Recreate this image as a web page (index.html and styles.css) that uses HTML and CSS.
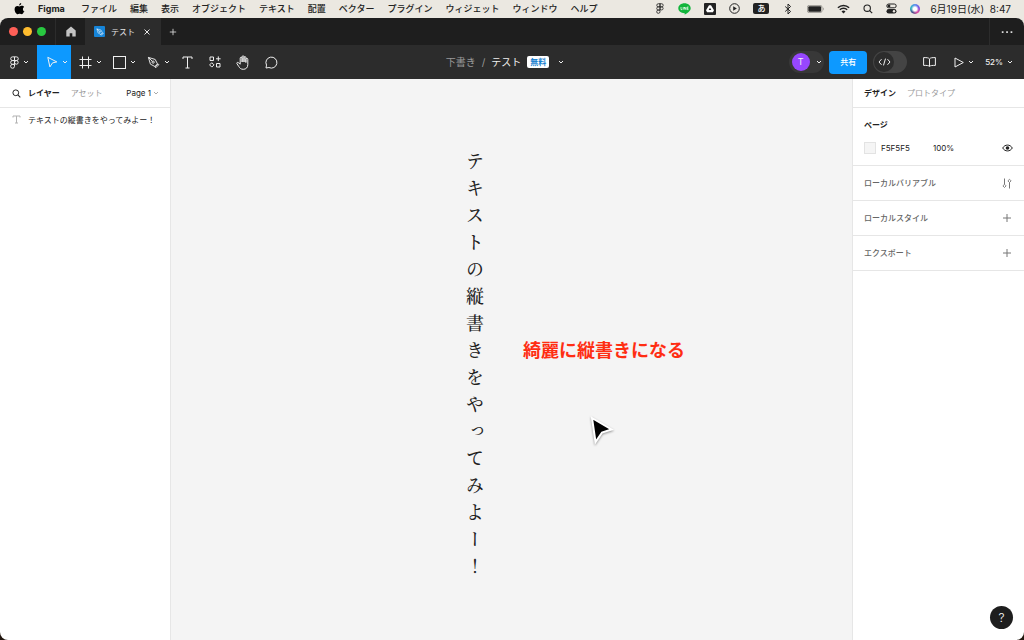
FILE: index.html
```html
<!DOCTYPE html>
<html lang="ja">
<head>
<meta charset="utf-8">
<title>テスト – Figma</title>
<link rel="stylesheet" href="styles.css">
</head>
<body>
<svg class="defs" width="0" height="0" aria-hidden="true">
  <symbol id="chev" viewBox="0 0 6 6"><path d="M1 2l2 2 2-2" fill="none" stroke="currentColor"/></symbol>
  <symbol id="figma" viewBox="0 0 10 12"><path d="M5 .8H3.2a1.7 1.7 0 000 3.4H5zM5 .8h1.8a1.7 1.7 0 010 3.4H5zM5 4.2H3.2a1.7 1.7 0 000 3.5H5zM5 7.7H3.2A1.8 1.8 0 105 9.5z" fill="none" stroke="currentColor" stroke-width=".9"/><circle cx="6.7" cy="5.9" r="1.7" fill="none" stroke="currentColor" stroke-width=".9"/></symbol>
  <symbol id="glass" viewBox="0 0 10 10"><circle cx="4.2" cy="4.2" r="3.2" fill="none" stroke="currentColor" stroke-width="1.1"/><path d="M6.6 6.6L9.2 9.2" stroke="currentColor" stroke-width="1.2"/></symbol>
  <symbol id="nib" viewBox="0 0 14 14"><path d="M1.5 1.5l7.3 2.2 2.5 4.8-2.8 2.8-4.8-2.5zM1.5 1.5l4.3 4.3M8.5 11.8l3.3-3.3.9.9-3.3 3.3z" fill="none" stroke="currentColor" stroke-linejoin="round"/><circle cx="6.6" cy="6.6" r="1.2" fill="none" stroke="currentColor"/></symbol>
  <symbol id="plus" viewBox="0 0 10 10"><path d="M5 1v8M1 5h8" fill="none" stroke="currentColor"/></symbol>
</svg>

<nav class="menubar" aria-label="メニューバー">
  <svg class="apple" width="11" height="12" viewBox="0 0 11 12"><path d="M7.2 0c.1 1.3-.9 2.400-2 2.400C5.100 1.200 6.100.2 7.200 0zM9.900 8.700c-.6 1.300-1.300 2.500-2.200 2.500-.8 0-1-.4-2-.4s-1.300.4-2 .4C2.300 11.200.6 8.600.6 6.200.6 4 2 2.900 3.400 2.900c.9 0 1.600.5 2.200.5s1.300-.6 2.500-.6c.5 0 1.400.2 2 1.100-1.800 1.100-1.500 3.800.5 4.500-.2.100-.4.200-.7.300z"/></svg>
  <div class="menus">
    <strong>Figma</strong><span>ファイル</span><span>編集</span><span>表示</span><span>オブジェクト</span><span>テキスト</span><span>配置</span><span>ベクター</span><span>プラグイン</span><span>ウィジェット</span><span>ウィンドウ</span><span>ヘルプ</span>
  </div>
  <div class="status">
    <svg width="10" height="11"><use href="#figma"/></svg>
    <span class="line-app"><svg width="13" height="12" viewBox="0 0 13 12"><path d="M6.500.3c3.500 0 6.200 2.200 6.200 5 0 2.600-3.400 5-6 6.400.2-.8.100-1.300-.2-1.400C3 10.200.3 8.100.3 5.300c0-2.800 2.700-5 6.200-5z" fill="#12b53c"/><path d="M3 4v2.600h1.300M5.200 4v2.600M6.300 6.600V4l1.600 2.600V4M10.500 4H9.200v2.600h1.300M9.200 5.300h1.200" fill="none" stroke="#fff" stroke-width=".7"/></svg></span>
    <svg width="12" height="12" viewBox="0 0 12 12"><rect width="12" height="12" rx="1" fill="#222"/><path d="M5 2.300h2l3 5-1.100 2H3.100L2 7.300zM6 4.800L4.700 7.100h2.600z" fill="#fff" fill-rule="evenodd"/></svg>
    <svg width="11" height="11" viewBox="0 0 11 11"><circle cx="5.500" cy="5.500" r="4.800" fill="none" stroke="#222"/><path d="M4.200 3.300l3.600 2.200-3.600 2.200z" fill="#222"/></svg>
    <span class="ime">あ</span>
    <svg width="12" height="12" viewBox="0 0 12 12"><path d="M3.200 3.500l5.400 5L6 11V1l2.600 2.500-5.400 5" fill="none" stroke="#222"/></svg>
    <svg width="17" height="8" viewBox="0 0 17 8"><rect x=".4" y=".4" width="14.600" height="7.200" rx="1.800" fill="none" stroke="#8b8984" stroke-width=".8"/><rect x="1.300" y="1.300" width="12.800" height="5.400" rx="1" fill="#222"/><path d="M16 2.600v2.800c.9-.5.9-2.300 0-2.800z" fill="#8b8984"/></svg>
    <svg width="13" height="10" viewBox="0 0 13 10"><path d="M.9 3.700a8 8 0 0111.200 0M2.800 5.700a5.300 5.300 0 017.400 0" fill="none" stroke="#222" stroke-width="1.500"/><path d="M6.500 9.500l2-2.100a2.900 2.900 0 00-4 0z" fill="#222"/></svg>
    <svg width="10" height="10"><use href="#glass"/></svg>
    <svg width="11" height="11" viewBox="0 0 11 11"><rect x=".8" y="1" width="9.400" height="3.800" rx="1.900" fill="none" stroke="#222"/><circle cx="3" cy="2.900" r="1.400" fill="#222"/><rect x=".5" y="6" width="10" height="4.600" rx="2.300" fill="#222"/><circle cx="8" cy="8.300" r="1.200" fill="#ebe8e1"/></svg>
    <div class="clock"><span class="siri"></span><time>6月19日(水)&nbsp; 8:47</time></div>
  </div>
</nav>

<div class="window">
  <header class="tabbar">
    <div class="lights"><i class="red"></i><i class="yellow"></i><i class="green"></i></div>
    <button class="home" aria-label="ホーム"><svg width="10" height="11" viewBox="0 0 10 11"><path d="M5 .5l4.700 4V10.500H6.300V7.300H3.700v3.200H.3v-6z" fill="#c4c4c4"/></svg></button>
    <div class="tab">
      <span class="file-icon"><svg width="8" height="8"><use href="#nib"/></svg></span>
      <span>テスト</span>
      <button aria-label="タブを閉じる"><svg width="8" height="8" viewBox="0 0 8 8"><path d="M1.500 1.500l5 5M6.500 1.500l-5 5" stroke="currentColor"/></svg></button>
    </div>
    <button class="new-tab" aria-label="新規タブ"><svg width="8" height="8"><use href="#plus"/></svg></button>
    <button class="more" aria-label="その他"><svg width="12" height="4" viewBox="0 0 12 4"><path d="M.8 1.200h1.700v1.700H.8zM5.200 1.200h1.700v1.700H5.200zM9.600 1.200h1.700v1.700H9.600z" fill="#ddd"/></svg></button>
  </header>

  <div class="toolbar">
    <div class="tools">
      <button class="tool main" aria-label="メインメニュー"><svg width="11" height="13"><use href="#figma"/></svg><svg width="6" height="6"><use href="#chev"/></svg></button>
      <button class="tool active" aria-label="移動"><svg width="12" height="12" viewBox="0 0 12 12"><path d="M1.800 1.300l9 4.600-4.300 1-2.600 4z" fill="none" stroke="currentColor" stroke-linejoin="round"/></svg><svg width="6" height="6"><use href="#chev"/></svg></button>
      <button class="tool" aria-label="フレーム"><svg width="13" height="13" viewBox="0 0 13 13"><path d="M3.500.5v12M9.500.5v12M.5 3.500h12M.5 9.500h12" stroke="currentColor"/></svg><svg width="6" height="6"><use href="#chev"/></svg></button>
      <button class="tool" aria-label="長方形"><svg width="13" height="13" viewBox="0 0 13 13"><rect x=".5" y=".5" width="12" height="12" fill="none" stroke="currentColor"/></svg><svg width="6" height="6"><use href="#chev"/></svg></button>
      <button class="tool" aria-label="ペン"><svg width="13" height="13"><use href="#nib"/></svg><svg width="6" height="6"><use href="#chev"/></svg></button>
      <button class="tool small" aria-label="テキスト"><svg width="11" height="13" viewBox="0 0 11 13"><path d="M1 3V1h9v2M5.500 1v11M3.500 12h4" fill="none" stroke="currentColor"/></svg></button>
      <button class="tool small" aria-label="リソース"><svg width="12" height="12" viewBox="0 0 12 12"><path d="M1 1h3.500v3.500H1zM7.500 7.500H11V11H7.500zM9.300.4v4.700M7 2.800h4.600M2.800 6.700l2.200 2.200-2.200 2.200L.6 8.900z" fill="none" stroke="currentColor"/></svg></button>
      <button class="tool small" aria-label="手のひら"><svg width="14" height="15" viewBox="0 0 14 15"><path d="M4.200 9.200V3.200a.95.95 0 011.900 0V7V1.800a.95.95 0 011.900 0V7V2.600a.95.95 0 011.900 0V7.500V4.300a.95.95 0 011.900 0V9.500c0 3-1.700 4.800-4.500 4.800-2.400 0-3.500-1.100-4.500-2.800L.9 8.600c-.5-1 .8-1.600 1.500-.9z" fill="none" stroke="currentColor" stroke-linejoin="round"/></svg></button>
      <button class="tool small" aria-label="コメント"><svg width="13" height="13" viewBox="0 0 13 13"><path d="M1 12l.5-2.900a5.500 5.500 0 112.400 2.400z" fill="none" stroke="currentColor" stroke-linejoin="round"/></svg></button>
    </div>
    <div class="title">
      <span class="dim">下書き</span><span class="dim">/</span><span>テスト</span><span class="plan">無料</span><svg width="6" height="6"><use href="#chev"/></svg>
    </div>
    <div class="actions">
      <button class="user" aria-label="ユーザー"><span class="avatar">T</span><svg width="6" height="6"><use href="#chev"/></svg></button>
      <button class="share">共有</button>
      <button class="devmode" aria-label="開発モード"><span><svg width="13" height="8" viewBox="0 0 13 8"><path d="M3.500 1.200L1 4l2.500 2.800M9.500 1.200L12 4 9.500 6.800M7.500.6l-2 6.800" fill="none" stroke="currentColor"/></svg></span></button>
      <button class="book" aria-label="ライブラリ"><svg width="13" height="10" viewBox="0 0 13 10"><path d="M6.500 2C5.500.6 4 .6.600.6v7.800c3 0 4.900 0 5.900 1 1-1 2.900-1 5.900-1V.6C9 .6 7.500.6 6.500 2zv7.200" fill="none" stroke="currentColor"/></svg></button>
      <button class="play" aria-label="プレゼンテーション"><svg width="10" height="11" viewBox="0 0 10 11"><path d="M1 1l8.300 4.500L1 10z" fill="none" stroke="currentColor" stroke-linejoin="round"/></svg><svg width="6" height="6"><use href="#chev"/></svg></button>
      <button class="zoom">52%<svg width="6" height="6"><use href="#chev"/></svg></button>
    </div>
  </div>

  <main class="work">
    <aside class="layers">
      <div class="panel-head">
        <svg width="9" height="9"><use href="#glass"/></svg>
        <button class="on">レイヤー</button>
        <button>アセット</button>
        <button class="page">Page 1<svg width="6" height="6"><use href="#chev"/></svg></button>
      </div>
      <div class="layer"><svg width="9" height="9" viewBox="0 0 9 9"><path d="M1 2.500V1h7v1.500M4.500 1v7M3 8h3" fill="none" stroke="#b3b3b3"/></svg><span>テキストの縦書きをやってみよー！</span></div>
    </aside>

    <section class="canvas">
      <p class="vertical">テキストの縦書きをやってみよー！</p>
      <p class="note">綺麗に縦書きになる</p>
      <svg class="cursor" width="26" height="30" viewBox="0 0 26 30"><path d="M3 2l19.500 11.500-9.500 3-6.500 9.500z" fill="#000" stroke="#fff" stroke-width="2"/></svg>
    </section>

    <aside class="design">
      <div class="panel-head tabs"><button class="on">デザイン</button><button>プロトタイプ</button></div>
      <section class="page-props">
        <h2>ページ</h2>
        <div class="fill"><i class="swatch"></i><span class="hex">F5F5F5</span><span>100%</span>
          <button aria-label="表示切替"><svg width="11" height="8" viewBox="0 0 11 8"><path d="M.7 4C2.800.1 8.200.1 10.300 4 8.200 7.900 2.800 7.900.7 4z" fill="none" stroke="#222"/><circle cx="5.500" cy="4" r="1.800" fill="#222"/></svg></button></div>
      </section>
      <section class="row"><h3>ローカルバリアブル</h3><button aria-label="バリアブル"><svg width="10" height="11" viewBox="0 0 10 11"><path d="M2.500.5v6M7.500 4.500v6" stroke="currentColor" fill="none"/><path d="M2.500 6.300l1.600 1.600-1.600 1.600L.9 7.900zM7.500 1.300l1.600 1.600-1.600 1.600-1.600-1.600z" fill="none" stroke="currentColor" stroke-width=".9"/></svg></button></section>
      <section class="row"><h3>ローカルスタイル</h3><button aria-label="スタイルを追加"><svg width="10" height="10"><use href="#plus"/></svg></button></section>
      <section class="row"><h3>エクスポート</h3><button aria-label="エクスポートを追加"><svg width="10" height="10"><use href="#plus"/></svg></button></section>
    </aside>
  </main>
  <button class="help" aria-label="ヘルプ">?</button>
</div>
</body>
</html>
```

FILE: styles.css
```css
* { box-sizing: border-box; }

body {
  margin: 0;
  min-height: 100vh;
  display: flex;
  flex-direction: column;
  background: linear-gradient(#ebe8e1 50%, #21160e 50%);
  color: #222;
  font: 8px/12px Inter, "Noto Sans CJK JP", sans-serif;
}

button {
  margin: 0;
  padding: 0;
  border: 0;
  background: none;
  color: inherit;
  font: inherit;
  display: flex;
  align-items: center;
  justify-content: center;
}

svg { display: block; flex: none; }
h2, h3, p { margin: 0; }
.defs { position: absolute; }

/* System menu bar */
.menubar {
  height: 18px;
  display: flex;
  align-items: center;
  padding: 0 13px 1px 14px;
  background: #ebe8e1;
  font-size: 9px;
  font-weight: 500;
  white-space: nowrap;
}
.menus { display: flex; gap: 13px; margin-left: 13px; }
.menus strong { width: 30px; }
.status { display: flex; align-items: center; gap: 13px; margin-left: auto; }
.ime {
  width: 16px;
  height: 11px;
  border-radius: 2px;
  background: #222;
  color: #fff;
  font-size: 8px;
  line-height: 11px;
  text-align: center;
}
.clock { display: flex; align-items: center; gap: 10px; font-size: 10px; font-weight: 400; }
.siri {
  width: 10px;
  height: 10px;
  border-radius: 50%;
  background: radial-gradient(#fff 25%, transparent 55%), conic-gradient(#5b8def, #7b4de0, #e0449a, #454f8c, #2bb8c4, #5b8def);
}

/* Application window */
.window {
  flex: 1;
  display: flex;
  flex-direction: column;
  position: relative;
  border-radius: 8px;
  overflow: hidden;
  background: #fff;
}

.tabbar { height: 27px; display: flex; background: #1e1e1e; color: #e5e5e5; }
.lights { width: 56px; display: flex; align-items: center; gap: 5px; padding-left: 9px; border-right: 1px solid #2c2c2c; }
.lights i { width: 9px; height: 9px; border-radius: 50%; }
.red { background: #fe5f57; }
.yellow { background: #febc2e; }
.green { background: #28c840; }
.home { width: 29px; }
.tab { width: 76px; display: flex; align-items: center; gap: 6px; padding: 0 10px 0 9px; background: #2c2c2c; white-space: nowrap; }
.tab button { margin-left: auto; }
.file-icon { width: 11px; height: 11px; display: grid; place-items: center; border-radius: 1px; background: #1684d8; color: #fff; }
.new-tab { width: 23px; }
.more { width: 35px; margin-left: auto; border-left: 1px solid #2c2c2c; }

.toolbar {
  height: 34px;
  display: grid;
  grid-template-columns: 1fr auto 1fr;
  background: #2c2c2c;
  color: #f0f0f0;
}
.tools { display: flex; }
.tool { width: 34px; gap: 4px; padding-left: 5px; }
.main { width: 37px; gap: 3px; padding: 0; }
.active { background: #0d99ff; }
.small { width: 28px; padding: 0; }
.title { display: flex; align-items: center; gap: 6px; padding-right: 14px; font-size: 10px; }
.dim { color: #9a9a9a; }
.plan { padding: 0 3px; border-radius: 2px; background: #fff; color: #1680cf; font-size: 8px; font-weight: 700; }
.title svg { margin-left: 3px; }

.actions { display: flex; align-items: center; justify-content: flex-end; padding-right: 11px; }
.user { width: 35px; height: 22px; gap: 6px; border-radius: 11px; background: #383838; }
.avatar { width: 18px; height: 18px; border-radius: 50%; background: #9747ff; font-size: 9px; line-height: 18px; }
.share { width: 38px; height: 23px; margin: 0 6px 0 5px; border-radius: 4px; background: #0d99ff; color: #fff; font-weight: 500; }
.devmode { width: 34px; height: 22px; justify-content: flex-start; padding: 1px; border-radius: 11px; background: #444; }
.devmode span { width: 20px; height: 20px; display: grid; place-items: center; border-radius: 50%; background: #2c2c2c; }
.book { margin-left: 16px; }
.play { gap: 4px; margin: 0 11px 0 18px; }
.zoom { gap: 4px; font-size: 8px; font-weight: 500; }

/* Panels */
.work { flex: 1; display: flex; }
.layers { width: 171px; border-right: 1px solid #e6e6e6; }
.panel-head { height: 29px; display: flex; align-items: center; border-bottom: 1px solid #e6e6e6; color: #999; white-space: nowrap; }
.panel-head .on { color: #222; font-weight: 700; }
.layers .panel-head { gap: 7px; padding: 0 11px 0 12px; }
.layers .panel-head > svg { color: #222; }
.layers .on { margin-right: 4px; }
.page { gap: 2px; margin-left: auto; color: #222; }
.page svg { color: #aaa; }
.layer { display: flex; align-items: center; gap: 7px; height: 23px; padding-left: 12px; white-space: nowrap; }

.canvas { flex: 1; position: relative; background: #f4f4f4; }
.vertical {
  position: absolute;
  left: 295px;
  top: 68px;
  width: 18px;
  font: 18px/27px "Noto Serif CJK JP", "Noto Sans CJK JP", serif;
  font-weight: 500;
  font-feature-settings: "vert";
  line-break: anywhere;
}
.note { position: absolute; left: 352px; top: 260px; color: #ff2d12; font-size: 18px; font-weight: 700; line-height: 24px; white-space: nowrap; }
.cursor { position: absolute; left: 418px; top: 337px; filter: drop-shadow(0 1px 1px #0006); }

.design { width: 172px; border-left: 1px solid #e6e6e6; }
.tabs { gap: 11px; padding-left: 11px; }
.page-props { height: 58px; padding: 11px 11px 0; border-bottom: 1px solid #e6e6e6; }
h2, h3 { font-size: 8px; line-height: 12px; }
h3 { color: #666; font-weight: 500; }
.fill { display: flex; align-items: center; height: 12px; margin-top: 11px; }
.swatch { width: 12px; height: 12px; margin-right: 5px; border: 1px solid #e3e3e3; background: #f5f5f5; }
.hex { width: 52px; }
.fill button { margin-left: auto; }
.row { height: 35px; display: flex; align-items: center; justify-content: space-between; padding: 0 12px 0 11px; border-bottom: 1px solid #e6e6e6; }
.row button { color: #777; }

.help {
  position: absolute;
  right: 11px;
  bottom: 11px;
  width: 23px;
  height: 23px;
  border-radius: 50%;
  background: #1e1e1e;
  color: #fff;
  font-size: 12px;
  font-weight: 300;
}
```
